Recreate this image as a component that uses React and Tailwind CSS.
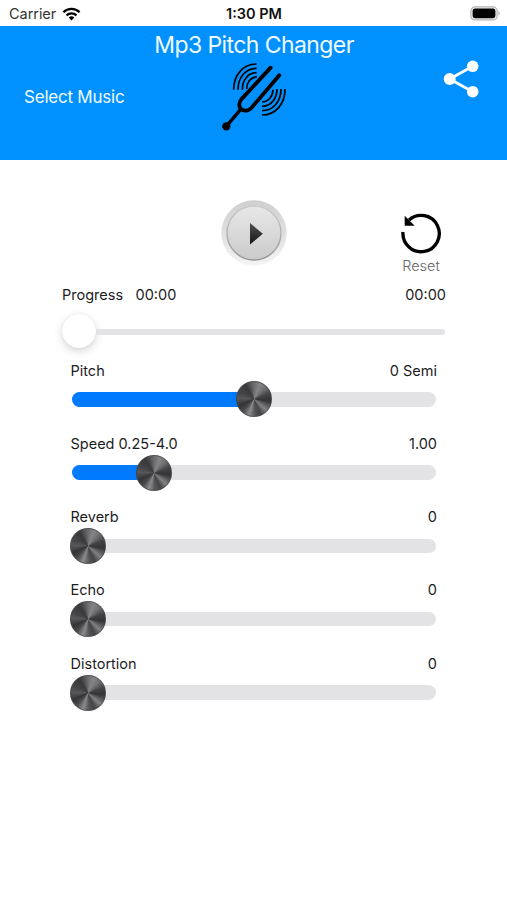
import React from "react";

function Wifi() {
  return (
    <svg width="19" height="14" viewBox="0 0 18 14" fill="none" stroke="#000" strokeWidth="2.3">
      <path d="M.9 5.2a11.6 11.6 0 0 1 16.2 0" />
      <path d="M4 8.4a7.2 7.2 0 0 1 10 0" />
      <path d="M9 13.4 6.2 10.6a4 4 0 0 1 5.6 0Z" fill="#000" stroke="none" />
    </svg>
  );
}

function Battery() {
  return (
    <svg width="31" height="15" viewBox="0 0 31 15">
      <rect x=".9" y=".9" width="26.2" height="13" rx="4" fill="#f2f2f2" stroke="#b5b5b5" strokeWidth="1.2" />
      <rect x="2.6" y="2.6" width="22.8" height="9.6" rx="2.4" fill="#000" />
      <path d="M28.4 5.2c1.8.6 1.8 3.8 0 4.4Z" fill="#b5b5b5" />
    </svg>
  );
}

function TuningFork() {
  return (
    <svg width="70" height="70" viewBox="45 36 210 210" fill="none" stroke="#000" strokeLinecap="round">
      <path d="M197 53 109 148C97 164 104 181 120 182C128 183 133 180 139 174L223 76" strokeWidth="11.5" />
      <path d="M107 178 64 229" strokeWidth="10" />
      <circle cx="64" cy="229" r="12.5" fill="#000" stroke="none" />
      <g strokeWidth="5.2" strokeLinecap="butt">
        <path d="M86 119C86 75 114 42 155 42" />
        <path d="M99 119C99 83 121 55 155 55" />
        <path d="M112 119C112 91 128 68 155 68" />
        <path d="M125 117C125 98 137 81 156 80" />
        <path d="M240 117C240 162 212 195 171 195" />
        <path d="M228 117C228 154 205 182 171 182" />
        <path d="M216 117C216 145 199 169 171 169" />
        <path d="M204 119C204 138 190 156 171 156" />
      </g>
    </svg>
  );
}

function Share() {
  return (
    <svg width="36" height="38" viewBox="0 0 36 38" fill="#fff">
      <path d="M29.7 6.3 6.7 19l23 12.7" fill="none" stroke="#fff" strokeWidth="2.8" />
      <circle cx="29.7" cy="6.3" r="5.8" />
      <circle cx="6.7" cy="19" r="6" />
      <circle cx="29.7" cy="31.7" r="5.8" />
    </svg>
  );
}

function PlayButton() {
  return (
    <svg width="68" height="68" viewBox="0 0 68 68">
      <defs>
        <linearGradient id="rim" x1="0" y1="0" x2="0" y2="1">
          <stop offset="0" stopColor="#cfcfcf" />
          <stop offset=".5" stopColor="#e0e0e0" />
          <stop offset="1" stopColor="#f4f4f4" />
        </linearGradient>
        <linearGradient id="face" x1="0" y1="0" x2="0" y2="1">
          <stop offset="0" stopColor="#e8e8e8" />
          <stop offset="1" stopColor="#cacaca" />
        </linearGradient>
        <linearGradient id="edge" x1="0" y1="0" x2="0" y2="1">
          <stop offset="0" stopColor="#cccccc" />
          <stop offset="1" stopColor="#969696" />
        </linearGradient>
        <linearGradient id="glyph" x1="0" y1="0" x2="0" y2="1">
          <stop offset="0" stopColor="#505050" />
          <stop offset="1" stopColor="#161616" />
        </linearGradient>
      </defs>
      <circle cx="34" cy="34" r="32.7" fill="url(#rim)" />
      <circle cx="34" cy="34" r="27" fill="url(#face)" stroke="url(#edge)" strokeWidth="1.4" />
      <path d="M30 24.1 42.8 34.800 30 45.5Z" fill="url(#glyph)" />
    </svg>
  );
}

function ResetIcon() {
  return (
    <svg width="42" height="42" viewBox="61 50 126 126">
      <path d="M88 74A54.500 54.500 0 1 1 70 110" fill="none" stroke="#000" strokeWidth="10" />
      <path d="M75 61V91H105Z" fill="#000" />
    </svg>
  );
}

const sliders = [
  { label: "Pitch", value: "0 Semi", at: 182 },
  { label: "Speed 0.25-4.0", value: "1.00", at: 82 },
  { label: "Reverb", value: "0", at: 16 },
  { label: "Echo", value: "0", at: 16 },
  { label: "Distortion", value: "0", at: 16 },
];

function Slider({ label, value, at }) {
  return (
    <div className="h-[73.3px] w-[366.500px]">
      <div className="flex h-[20px] items-center justify-between pt-[1px] text-[14.5px] leading-[20px]">
        <span>{label}</span>
        <span>{value}</span>
      </div>
      <div className="relative mr-[1.500px] ml-px mt-[12px] h-[14.6px] rounded-full bg-[#e3e3e5]">
        <div className="h-full rounded-l-full bg-[#007aff]" style={{ width: at }} />
        <div
          className="absolute top-[-10.7px] size-[36px] -translate-x-1/2 rounded-full border border-[#4a4a4c]/70 bg-[conic-gradient(from_0deg,#6c6c6e_0deg,#858587_22deg,#707072_45deg,#424244_72deg,#343436_98deg,#828284_132deg,#444446_156deg,#545456_176deg,#8c8c8e_198deg,#4a4a4c_222deg,#343436_245deg,#58585a_272deg,#454547_295deg,#38383a_328deg,#6c6c6e_360deg)]"
          style={{ left: at }}
        />
      </div>
    </div>
  );
}

export default function App() {
  return (
    <div className="flex h-[900px] w-full flex-col overflow-hidden bg-white font-['Inter',sans-serif] text-[#1c1c1e]">
      <div className="grid h-[25.5px] shrink-0 grid-cols-3 items-center pt-[2px]">
        <div className="flex items-center gap-[6px] pl-[9px] text-[14.5px] leading-none tracking-[-0.05px] text-[#333]">
          <span>Carrier</span>
          <Wifi />
        </div>
        <div className="pl-px text-center text-[14.5px] font-semibold leading-none text-[#111]">1:30 PM</div>
        <div className="flex justify-end pr-[6px]">
          <Battery />
        </div>
      </div>

      <header className="grid h-[134px] shrink-0 grid-cols-[140px_1fr_140px] bg-[#0091ff] text-[#f0faff]">
        <div className="pl-[24px] pt-[59px] text-[17px] leading-[24px] tracking-[-0.22px] whitespace-nowrap">Select Music</div>
        <div className="flex flex-col items-center">
          <h1 className="ml-px mt-[4px] h-[30px] text-[23px] leading-[30px] tracking-[-0.58px] whitespace-nowrap">Mp3 Pitch Changer</h1>
          <div className="ml-[3px] mt-[2.5px]">
            <TuningFork />
          </div>
        </div>
        <div className="flex justify-end pr-[28px] pt-[34.5px]">
          <Share />
        </div>
      </header>

      <div className="flex h-[123.5px] items-start pl-[220px] pt-[39.500px]">
        <PlayButton />
        <div className="ml-[112px] mt-[13px] flex flex-col items-center">
          <ResetIcon />
          <span className="mt-[2px] text-[14.5px] font-light leading-[20px] text-[#666]">Reset</span>
        </div>
      </div>

      <div className="flex h-[20px] items-center pl-[62px] pr-[61px] pt-[3px] text-[14.5px]">
        <span>Progress</span>
        <span className="ml-[12.500px]">00:00</span>
        <span className="ml-auto">00:00</span>
      </div>
      <div className="mt-[11px] flex h-[34px] items-center pl-[62px] pr-[62.500px]">
        <div className="size-[34px] shrink-0 rounded-full bg-white shadow-[0_3px_9px_rgba(0,0,0,0.17),0_0_1px_rgba(0,0,0,0.12)]" />
        <div className="mt-[2px] h-[5.5px] flex-1 rounded-r-full bg-[#e3e3e5]" />
      </div>

      <div className="flex flex-col pl-[70.500px] pt-[12px]">
        {sliders.map((s) => (
          <Slider key={s.label} {...s} />
        ))}
      </div>
    </div>
  );
}
